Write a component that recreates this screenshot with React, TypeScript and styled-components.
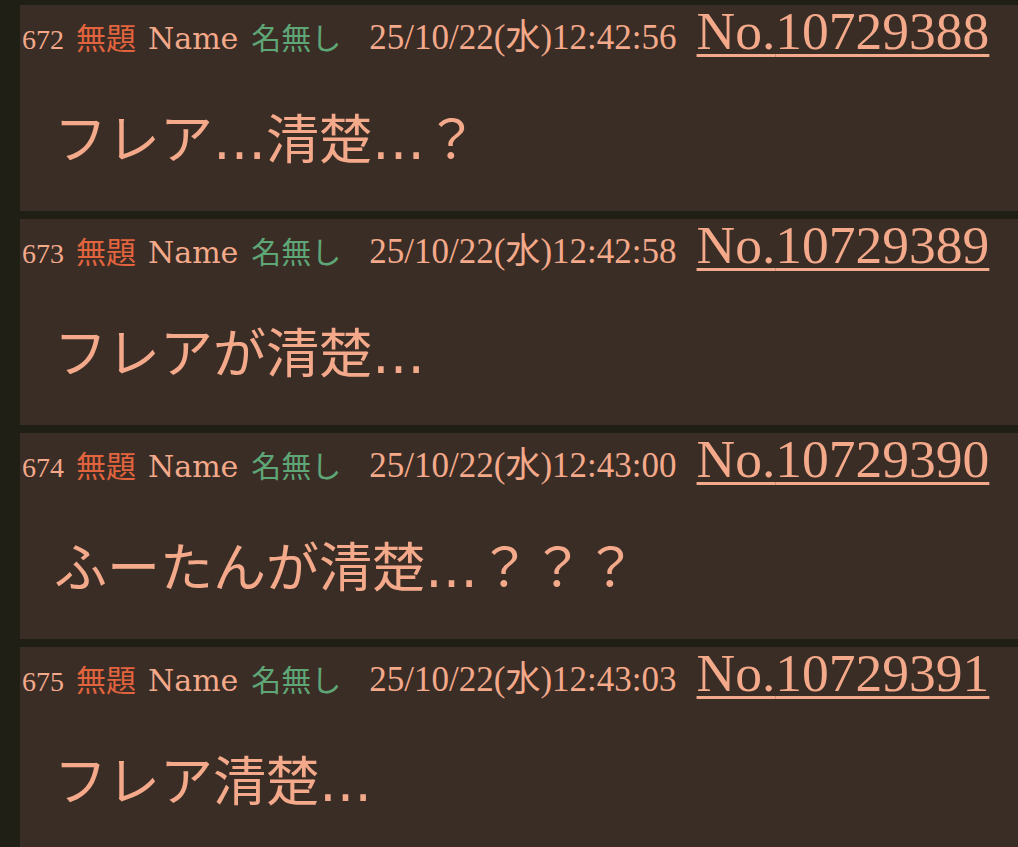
import styled, { createGlobalStyle } from "styled-components";

interface IPost {
  index: number;
  date: string;
  no: number;
  body: string;
}

const posts: IPost[] = [
  { index: 672, date: "25/10/22(水)12:42:56", no: 10729388, body: "フレア…清楚…？" },
  { index: 673, date: "25/10/22(水)12:42:58", no: 10729389, body: "フレアが清楚…" },
  { index: 674, date: "25/10/22(水)12:43:00", no: 10729390, body: "ふーたんが清楚…？？？" },
  { index: 675, date: "25/10/22(水)12:43:03", no: 10729391, body: "フレア清楚…" },
];

const GlobalStyle = createGlobalStyle`
  html, body {
    margin: 0;
    padding: 0;
    background: #1f1f15;
  }
  body {
    overflow: hidden;
  }
`;

const Thread = styled.div`
  display: flex;
  flex-direction: column;
  gap: 8px;
  padding: 5px 0 0 20px;
`;

const Card = styled.div`
  display: flex;
  flex-direction: column;
  height: 206px;
  background: #3a2d26;
  color: #f3a98a;
`;

const Head = styled.div`
  display: flex;
  align-items: baseline;
  height: 59px;
  padding-left: 2px;
  white-space: nowrap;
  font-family: "DejaVu Serif", "Noto Sans CJK JP", serif;
  font-size: 30px;
  line-height: 1;
`;

const Index = styled.span`
  font-family: "Liberation Serif", serif;
  font-size: 28px;
  margin-right: 12px;
`;

const Subject = styled.span`
  font-family: "Noto Sans CJK JP", sans-serif;
  color: #e2643e;
  margin-right: 12px;
`;

const Label = styled.span`
  margin-right: 13px;
`;

const Author = styled.span`
  font-family: "Noto Sans CJK JP", sans-serif;
  color: #5fa677;
  margin-right: 28px;
`;

const Stamp = styled.span`
  margin-right: 20px;
  font-family: "Liberation Serif", "Noto Sans CJK JP", serif;
  font-size: 35px;
`;

const PostNo = styled.a`
  font-family: "Liberation Serif", serif;
  font-size: 53.5px;
  color: #f3a98a;
  text-decoration: underline;
  text-decoration-thickness: 3px;
  text-underline-offset: 5px;
`;

const Body = styled.div`
  padding: 46px 0 0 34px;
  font-family: "Noto Sans CJK JP", sans-serif;
  font-size: 53px;
  line-height: 1;
  white-space: nowrap;
`;

const Dots = styled.span`
  display: inline-block;
  width: 1em;
  text-align: center;
  font-family: "DejaVu Sans", sans-serif;
`;

function renderBody(text: string) {
  const parts = text.split("…");
  return parts.map((part, i) => (
    <span key={i}>
      {part}
      {i < parts.length - 1 ? <Dots>…</Dots> : null}
    </span>
  ));
}

function App() {
  return (
    <>
      <GlobalStyle />
      <Thread>
        {posts.map((post) => (
          <Card key={post.no}>
            <Head>
              <Index>{post.index}</Index>
              <Subject>無題</Subject>
              <Label>Name</Label>
              <Author>名無し</Author>
              <Stamp>{post.date}</Stamp>
              <PostNo>No.{post.no}</PostNo>
            </Head>
            <Body>{renderBody(post.body)}</Body>
          </Card>
        ))}
      </Thread>
    </>
  );
}

export default App;
